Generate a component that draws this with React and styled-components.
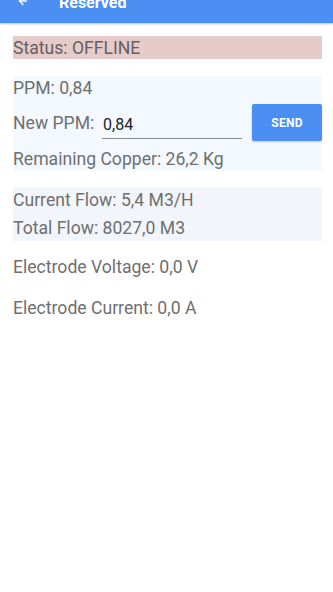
import React from 'react';
import styled, { createGlobalStyle } from 'styled-components';
import { ArrowLeft } from 'lucide-react';

const GlobalStyle = createGlobalStyle`
    body {
        margin: 0;
        background: #ffffff;
        font-family: Roboto, "Noto Sans", sans-serif;
    }
`
const Page = styled.div`
    width: 333px;
    min-height: 592px;
    background: #ffffff;
`
const Header = styled.div`
    height: 23px;
    overflow: hidden;
    background: #4a8ff1;
    box-shadow: 0 1px 2px rgba(0, 0, 0, 0.25);
    display: flex;
    align-items: flex-end;
    padding: 0 0 12px 17px;
    box-sizing: border-box;
    color: #ffffff;
`
const Back = styled.div`
    width: 12px;
    height: 12px;
    display: flex;
    margin-bottom: 4px;
`
const Title = styled.div`
    font-size: 16px;
    line-height: 16px;
    font-weight: 700;
    margin-left: 30px;
`
const Content = styled.div`
    padding: 13px 11px 0 13px;
    display: flex;
    flex-direction: column;
`
const Line = styled.div`
    font-size: 17.6px;
    line-height: ${p => p.$h || 24}px;
    padding-top: 1px;
    color: #6f6f6f;
    margin-top: ${p => p.$mt || 0}px;
    white-space: nowrap;
`
const Status = styled(Line)`
    background: #e6cbcb;
    color: #666060;
`
const Panel = styled.div`
    background: ${p => p.$bg};
    margin-top: ${p => p.$mt || 0}px;
    display: flex;
    flex-direction: column;
    gap: ${p => p.$gap || 0}px;
`
const Row = styled.div`
    display: flex;
    align-items: center;
    height: 37px;
    margin-top: 4px;
    margin-bottom: 6px;
`
const Label = styled.label`
    font-size: 17.6px;
    color: #6f6f6f;
    width: 89px;
    white-space: nowrap;
`
const Input = styled.input`
    width: 140px;
    height: 26px;
    border: none;
    border-bottom: 1px solid #8a8a8a;
    background: transparent;
    outline: none;
    font-family: Roboto, "Noto Sans", sans-serif;
    font-size: 16px;
    color: #222222;
    padding: 0 0 2px 1px;
    box-sizing: border-box;
    margin-top: 6px;
`
const SendButton = styled.button`
    margin-left: auto;
    width: 70px;
    height: 37px;
    border: none;
    border-radius: 2px;
    background: #4a8ff1;
    color: #ffffff;
    font-family: Roboto, "Noto Sans", sans-serif;
    font-size: 12px;
    font-weight: 700;
    letter-spacing: 0.3px;
    box-shadow: 0 1px 2px rgba(0, 0, 0, 0.2);
`

const App = () => {
    return (
        <Page>
            <GlobalStyle />
            <Header>
                <Back><ArrowLeft size={12} strokeWidth={2.6} /></Back>
                <Title>Reserved</Title>
            </Header>
            <Content>
                <Status $h={22}>Status: OFFLINE</Status>
                <Panel $bg='#f3f9ff' $mt={17}>
                    <Line $h={23}>PPM: 0,84</Line>
                    <Row>
                        <Label htmlFor='ppm'>New PPM:</Label>
                        <Input id='ppm' type='text' defaultValue='0,84' />
                        <SendButton>SEND</SendButton>
                    </Row>
                    <Line $h={23}>Remaining Copper: 26,2 Kg</Line>
                </Panel>
                <Panel $bg='#f2f5fb' $mt={16} $gap={2}>
                    <Line $h={25}>Current Flow: 5,4 M3/H</Line>
                    <Line $h={25}>Total Flow: 8027,0 M3</Line>
                </Panel>
                <Line $h={23} $mt={14}>Electrode Voltage: 0,0 V</Line>
                <Line $h={23} $mt={17}>Electrode Current: 0,0 A</Line>
            </Content>
        </Page>
    )
}

export default App;
